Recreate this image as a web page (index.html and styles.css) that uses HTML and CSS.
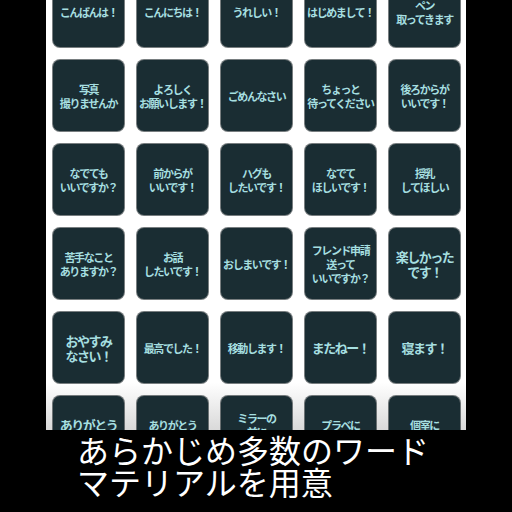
FILE: index.html
```html
<!DOCTYPE html>
<html lang="ja">
<head>
<meta charset="utf-8">
<link rel="stylesheet" href="styles.css">
</head>
<body>
<div class="screen">
  <div class="panel">
    <div class="grid">
      <div class="tile">こんばんは！</div>
      <div class="tile">こんにちは！</div>
      <div class="tile">うれしい！</div>
      <div class="tile">はじめまして！</div>
      <div class="tile">ペン<br>取ってきます</div>

      <div class="tile">写真<br>撮りませんか</div>
      <div class="tile">よろしく<br>お願いします！</div>
      <div class="tile">ごめんなさい</div>
      <div class="tile">ちょっと<br>待ってください</div>
      <div class="tile">後ろからが<br>いいです！</div>

      <div class="tile">なでても<br>いいですか？</div>
      <div class="tile">前からが<br>いいです！</div>
      <div class="tile">ハグも<br>したいです！</div>
      <div class="tile">なでて<br>ほしいです！</div>
      <div class="tile">授乳<br>してほしい</div>

      <div class="tile">苦手なこと<br>ありますか？</div>
      <div class="tile">お話<br>したいです！</div>
      <div class="tile">おしまいです！</div>
      <div class="tile">フレンド申請<br>送って<br>いいですか？</div>
      <div class="tile big">楽しかった<br>です！</div>

      <div class="tile big">おやすみ<br>なさい！</div>
      <div class="tile">最高でした！</div>
      <div class="tile">移動します！</div>
      <div class="tile big">またねー！</div>
      <div class="tile big">寝ます！</div>

      <div class="tile big">ありがとう<br>ございます！</div>
      <div class="tile">ありがとう<br>ございました！</div>
      <div class="tile">ミラーの<br>前に<br>行きましょう</div>
      <div class="tile">プラベに<br>行きませんか？</div>
      <div class="tile">個室に<br>行きませんか？</div>
    </div>
  </div>
  <div class="caption">あらかじめ多数のワード<br>マテリアルを用意</div>
</div>
</body>
</html>
```

FILE: styles.css
```css
html, body {
  margin: 0;
  padding: 0;
  background: #000;
}
.screen {
  width: 512px;
  height: 512px;
  overflow: hidden;
  display: flex;
  flex-direction: column;
  align-items: center;
}
.panel {
  width: 420px;
  height: 430px;
  flex: none;
  overflow: hidden;
  background: linear-gradient(to bottom, #ffffff 0%, #ffffff 89%, #d9d9d9 100%);
  box-sizing: border-box;
  padding-left: 7px;
}
.grid {
  margin-top: -24px;
  display: grid;
  grid-template-columns: repeat(5, 71px);
  grid-auto-rows: 71px;
  column-gap: 13px;
  row-gap: 13px;
}
.tile {
  background: #1a2d33;
  border-radius: 7px;
  box-shadow: 0 0 0 1px rgba(10, 20, 24, 0.55);
  color: #a6dfe0;
  font-family: "Noto Sans CJK JP", sans-serif;
  font-weight: bold;
  font-size: 11px;
  letter-spacing: -1.4px;
  line-height: 14px;
  display: flex;
  align-items: center;
  justify-content: center;
  text-align: center;
  white-space: nowrap;
}
.tile.big {
  font-size: 13px;
  letter-spacing: -1.5px;
  line-height: 15px;
}
.caption {
  width: 512px;
  box-sizing: border-box;
  padding: 3px 0 0 77px;
  color: #fff;
  font-family: "Noto Sans CJK JP", sans-serif;
  font-size: 32px;
  line-height: 32px;
  white-space: nowrap;
}
```
